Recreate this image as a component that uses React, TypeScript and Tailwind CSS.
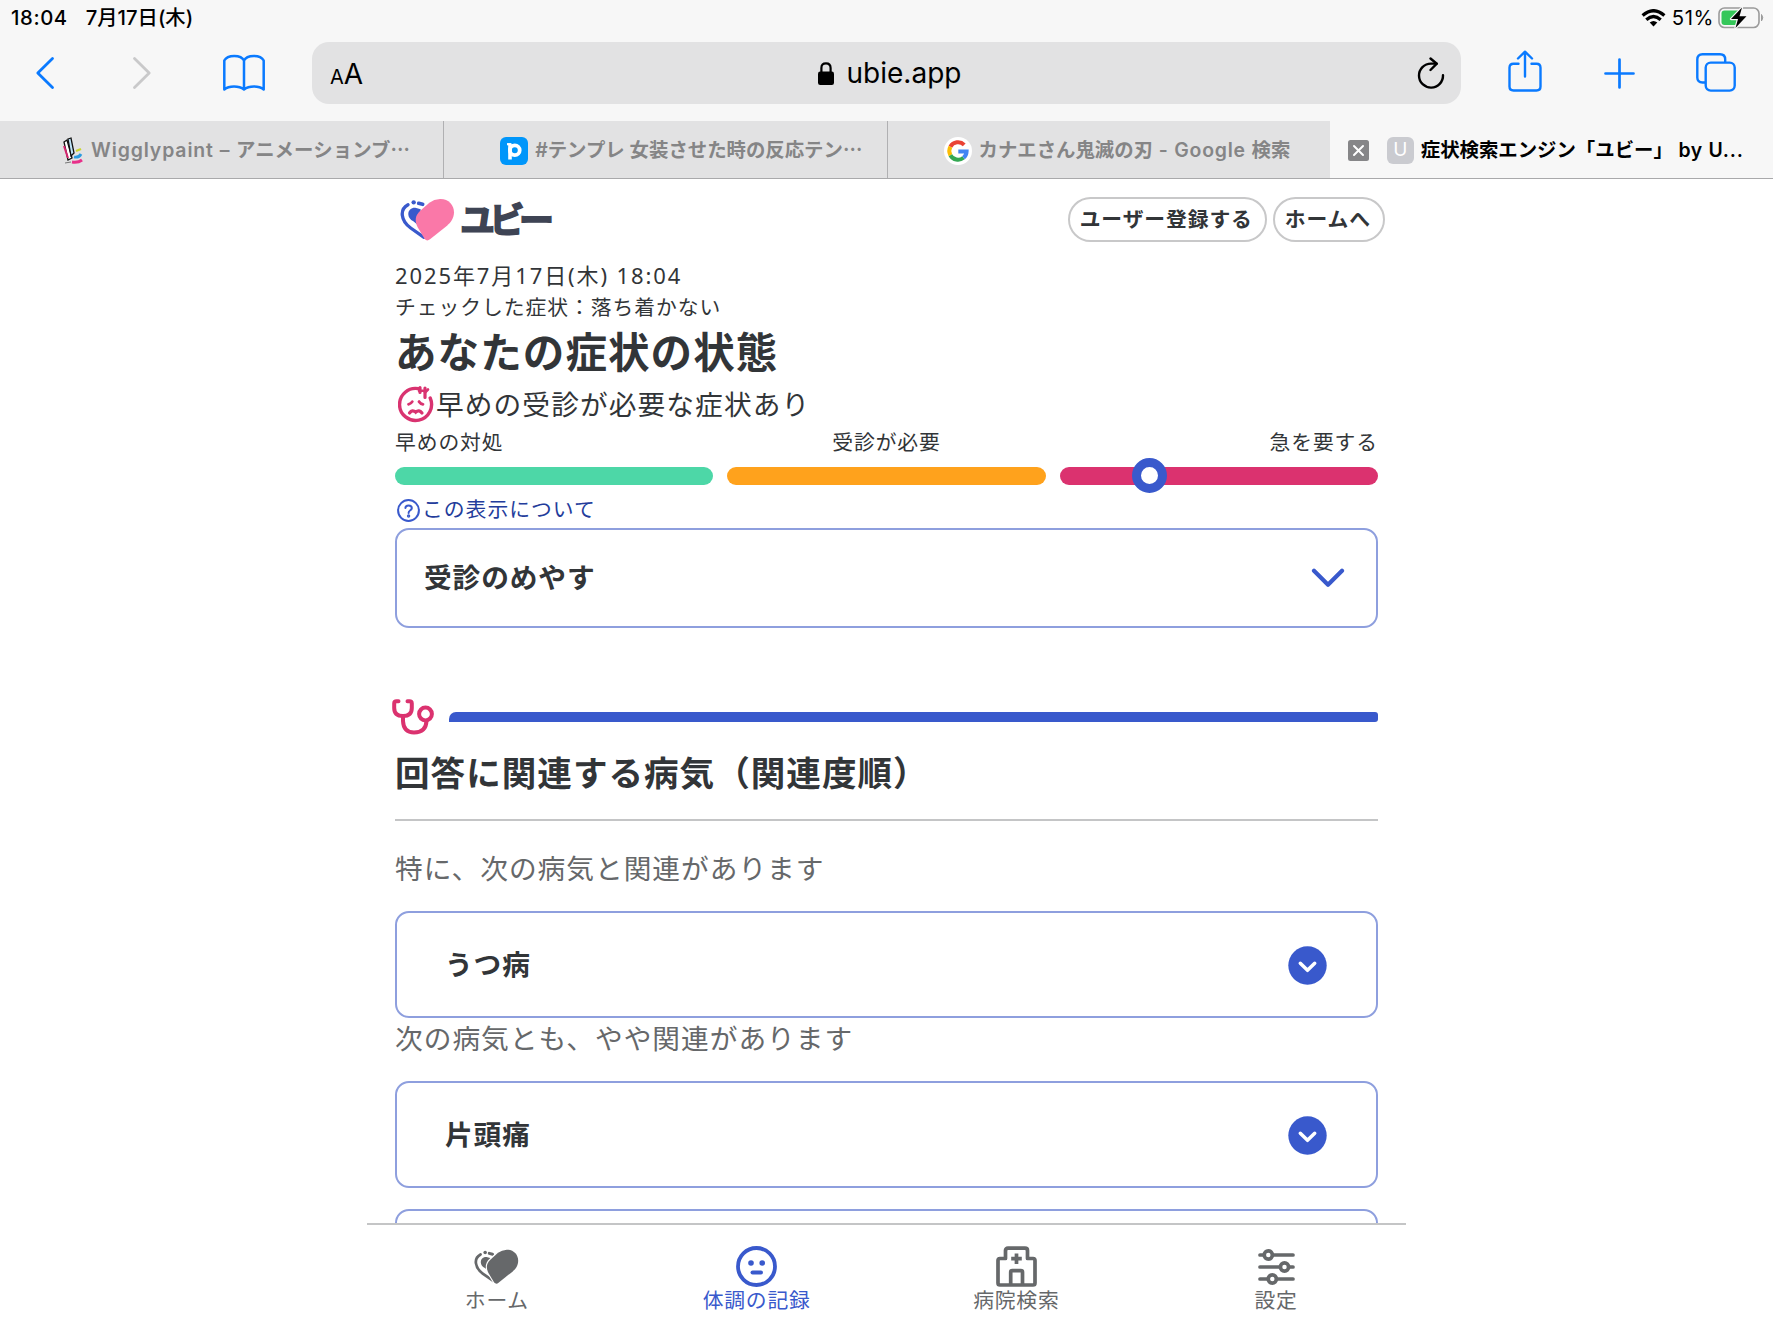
import type { ReactNode } from "react";

const browserTabs = [
  {
    id: "wiggly",
    title: (
      <>
        <span className="tracking-[0.9px]">Wigglypaint – </span>
        <span className="tracking-[0.1px]">アニメーションブ⋯</span>
      </>
    ),
    icon: <WigglyIcon />,
    pad: "pl-[62px]",
  },
  { id: "pixiv", title: "#テンプレ 女装させた時の反応テン⋯", icon: <PixivIcon />, pad: "pl-[56px]" },
  {
    id: "google",
    title: (
      <>
        カナエさん鬼滅の刃<span className="tracking-[0.8px]"> - Google </span>検索
      </>
    ),
    icon: <GoogleIcon />,
    pad: "pl-[56px]",
  },
];

function WigglyIcon() {
  return (
    <svg width="22" height="28" viewBox="0 0 22 28" fill="none" className="shrink-0">
      <path d="M2 5 L5 3 L10 21 L6 23 Z" fill="#fff" stroke="#111" strokeWidth="1.3" />
      <path d="M6 2 L9 1 L12 16 L9 19 Z" fill="#bfe3f7" stroke="#111" strokeWidth="1.3" />
      <path d="M2 9 L6 21" stroke="#d6246e" strokeWidth="2" />
      <path d="M14 14 L19 12" stroke="#c9d631" strokeWidth="2.4" />
      <path d="M12 20 Q17 21 19 17" stroke="#2a9be0" strokeWidth="2.8" />
      <path d="M10 25 Q16 26 20 23" stroke="#e8308a" strokeWidth="3" />
      <path d="M3 26 L9 25" stroke="#777" strokeWidth="1" />
    </svg>
  );
}

function PixivIcon() {
  return (
    <svg width="28" height="28" viewBox="0 0 28 28" className="shrink-0">
      <rect width="28" height="28" rx="6" fill="#0096fa" />
      <path d="M7 7.2 H11" stroke="#fff" strokeWidth="2.2" fill="none" />
      <path d="M10 6.5 V22.5" stroke="#fff" strokeWidth="3.6" />
      <circle cx="14.8" cy="13.3" r="4.9" fill="none" stroke="#fff" strokeWidth="3.8" />
    </svg>
  );
}

function GoogleIcon() {
  return (
    <svg width="28" height="28" viewBox="0 0 28 28" className="shrink-0">
      <circle cx="14" cy="14" r="14" fill="#fff" />
      <g fill="none" strokeWidth="4">
        <path d="M20.2 7.8 A8.7 8.7 0 0 0 6.4 9.8" stroke="#ea4335" />
        <path d="M6.4 9.8 A8.7 8.7 0 0 0 6.4 18.2" stroke="#fbbc05" />
        <path d="M6.4 18.2 A8.7 8.7 0 0 0 19.5 20.8" stroke="#34a853" />
        <path d="M19.5 20.8 A8.7 8.7 0 0 0 22.6 14.4 H14.3" stroke="#4285f4" />
      </g>
    </svg>
  );
}

function HeartMark({ front, back, halo }: { front: string; back: string; halo: number }) {
  return (
    <>
      <path d="M132 172 L92 144 C62 122 58 88 84 74" fill="none" stroke={back} strokeWidth="10" strokeLinecap="round" />
      <circle cx="101" cy="67" r="6.5" fill={back} />
      <path d="M116 70 L128 73" stroke={back} strokeWidth="11" strokeLinecap="round" />
      <path d="M85 104 C84 88 96 82 106 83 L122 88 L120 140 L100 124 C90 118 86 112 85 104Z" fill={back} />
      <path
        d="M180 57 C205 56 222 75 222 97 C222 114 213 127 201 137 L150 178 Q141 185 134 177 L113 142 C103 122 106 106 120 93 L148 68 Q162 58 180 57Z"
        fill={front}
        stroke="#fff"
        strokeWidth={halo}
        paintOrder="stroke"
      />
    </>
  );
}

function StatusBar() {
  return (
    <div className="flex h-[36px] items-start justify-between pt-[5px] pr-[8px] pl-[11px] text-[20.3px] leading-[25px] font-medium text-black">
      <div className="flex gap-[18px]">
        <span className="tracking-[0.6px]">18:04</span>
        <span>7月17日(木)</span>
      </div>
      <div className="flex items-center gap-[6px]">
        <svg width="25" height="18" viewBox="0 0 25 18" fill="none" stroke="#000" strokeWidth="3.3">
          <path d="M1.6 6.4 Q12.5 -3 23.4 6.4" />
          <path d="M5.3 10.7 Q12.5 4.4 19.7 10.7" />
          <path d="M12.5 17.5 L8.7 13.6 Q12.5 10.6 16.3 13.6 Z" fill="#000" stroke="none" />
        </svg>
        <span className="font-normal tracking-[0.6px]">51%</span>
        <svg width="47" height="24" viewBox="0 0 47 24" className="-ml-[2px]">
          <rect x="1" y="2" width="40" height="19.5" rx="5.5" fill="none" stroke="#9b9b9b" strokeWidth="1.6" />
          <path d="M6.5 4.5 H21 V19 H6.5 Q3.5 19 3.5 16 V7.5 Q3.5 4.5 6.5 4.5Z" fill="#34c759" />
          <path d="M43.5 8.5 Q46 11.7 43.5 15Z" fill="#9b9b9b" stroke="#9b9b9b" />
          <path d="M24 1.5 L13 13 H20 L17.5 22 L28.5 10.3 H21.5 Z" fill="#000" stroke="#f7f7f7" strokeWidth="2.4" paintOrder="stroke" strokeLinejoin="round" />
        </svg>
      </div>
    </div>
  );
}

function Toolbar() {
  return (
    <div className="flex h-[85px] items-start pt-[6px]">
      <div className="flex h-[62px] w-[312px] shrink-0 items-center pl-[35px]">
        <svg width="20" height="34" viewBox="0 0 20 34" fill="none" stroke="#0a7aff" strokeWidth="2.8" strokeLinecap="round" strokeLinejoin="round">
          <path d="M17.5 2.5 L2.8 17 L17.5 31.5" />
        </svg>
        <svg width="20" height="34" viewBox="0 0 20 34" fill="none" stroke="#c9c9ca" strokeWidth="2.8" strokeLinecap="round" strokeLinejoin="round" className="ml-[77px]">
          <path d="M2.5 2.5 L17.2 17 L2.5 31.5" />
        </svg>
        <svg width="42" height="38" viewBox="0 0 42 38" fill="none" stroke="#0a7aff" strokeWidth="2.5" strokeLinejoin="round" className="ml-[71px]">
          <path d="M21 6.5 C18 0.4 4.5 0.4 1.3 6.5 V35.5 C6 31.5 16 31.5 21 35.5 C26 31.5 36 31.5 40.7 35.5 V6.5 C37.5 0.4 24 0.4 21 6.5 V35.5" />
        </svg>
      </div>
      <div className="flex h-[62px] w-[1149px] shrink-0 items-center justify-between rounded-[17px] bg-[#e2e2e3] pr-[16px] pl-[18px] text-black">
        <div className="flex w-[60px] items-baseline pt-[2px] leading-none">
          <span className="text-[20px]">A</span>
          <span className="text-[28px]">A</span>
        </div>
        <div className="flex items-center gap-[13px] pl-[4px]">
          <svg width="16" height="23" viewBox="0 0 16 23">
            <path d="M3.4 11 V6 Q3.4 1.4 8 1.4 Q12.6 1.4 12.6 6 V11" fill="none" stroke="#000" strokeWidth="2.2" />
            <rect y="9.5" width="16" height="13.5" rx="2.2" />
          </svg>
          <span className="text-[28px] leading-[34px]">ubie.app</span>
        </div>
        <div className="flex w-[60px] justify-end">
          <svg width="28" height="32" viewBox="0 0 28 32" fill="none" stroke="#000" strokeWidth="2.4" strokeLinecap="round" strokeLinejoin="round">
            <path d="M26 18.2 A12 12 0 1 1 14 6.6 H19.5" />
            <path d="M13.5 1.5 L19.8 6.7 L13.5 13" />
          </svg>
        </div>
      </div>
      <div className="flex h-[60px] items-center pl-[47px]">
        <svg width="34" height="42" viewBox="0 0 34 42" fill="none" stroke="#0a7aff" strokeWidth="2.4" strokeLinecap="round" strokeLinejoin="round" className="-mt-[2px]">
          <path d="M10.5 13.7 H5.5 Q1.5 13.7 1.5 17.7 V36.5 Q1.5 40.5 5.5 40.5 H28.5 Q32.5 40.5 32.5 36.5 V17.7 Q32.5 13.7 28.5 13.7 H23.5" />
          <path d="M17 26.5 V2 M10 8.5 L17 1.7 L24 8.5" />
        </svg>
        <svg width="31" height="31" viewBox="0 0 31 31" stroke="#0a7aff" strokeWidth="2.7" strokeLinecap="round" className="mt-[2px] ml-[62px]">
          <path d="M15.5 1.5 V29.5 M1.5 15.5 H29.5" />
        </svg>
        <svg width="40" height="39" viewBox="0 0 40 39" fill="none" stroke="#0a7aff" strokeWidth="2.4" className="ml-[61px]">
          <path d="M9.5 29.5 H6.5 Q1.3 29.5 1.3 24.5 V6.5 Q1.3 1.3 6.5 1.3 H24 Q29.2 1.3 29.2 6.5 V9" />
          <rect x="9.7" y="9.6" width="29" height="28" rx="5" />
        </svg>
      </div>
    </div>
  );
}

function TabStrip() {
  return (
    <div className="grid h-[58px] grid-cols-4 border-b border-[#a9a9ab] text-[19.4px] font-semibold whitespace-nowrap">
      {browserTabs.map((tab, i) => (
        <div
          key={tab.id}
          className={`flex items-center gap-[7px] bg-[#e2e2e3] pt-[2px] text-[#858586] ${tab.pad} ${i > 0 ? "border-l border-[#b0b0b2]" : ""}`}
        >
          {tab.icon}
          <span className="pt-px whitespace-pre">{tab.title}</span>
        </div>
      ))}
      <div className="flex items-center pt-[2px] pl-[18px] text-black">
        <svg width="21" height="21" viewBox="0 0 21 21">
          <rect width="21" height="21" rx="2.5" fill="#868688" />
          <path d="M6 6 L15 15 M15 6 L6 15" stroke="#fff" strokeWidth="2" strokeLinecap="round" />
        </svg>
        <span className="ml-[18px] flex size-[27px] items-center justify-center rounded-[6px] bg-[#cacbd0] text-[19px] font-normal text-white">
          U
        </span>
        <span className="ml-[7px] pt-px">
          症状検索エンジン「ユビー」<span className="tracking-[0.7px]"> by U...</span>
        </span>
      </div>
    </div>
  );
}

function PillButton({ children }: { children: ReactNode }) {
  return (
    <button className="h-[45px] rounded-full border-2 border-[#c8c8c9] pr-[12px] pb-[3px] pl-[10px] text-[20.8px] leading-none font-bold tracking-[0.9px]">
      {children}
    </button>
  );
}

function DiseaseCard({ name }: { name?: string }) {
  return (
    <div className="flex h-[107px] shrink-0 items-center justify-between rounded-[14px] border-2 border-[#8e9fde] pr-[49px] pl-[48px]">
      <span className="pb-[2px] text-[27.7px] font-bold tracking-[0.9px]">{name}</span>
      <svg width="39" height="39" viewBox="0 0 39 39" className="mt-px">
        <circle cx="19.5" cy="19.5" r="19.2" fill="#3959cc" />
        <path d="M12.3 17.3 L19.5 24.3 L26.7 17.3" fill="none" stroke="#fff" strokeWidth="3.5" strokeLinecap="round" strokeLinejoin="round" />
      </svg>
    </div>
  );
}

function SeverityScale() {
  return (
    <>
      <div className="grid h-[42px] shrink-0 grid-cols-3 text-[20.8px] leading-[32px] tracking-[0.9px]">
        <span>早めの対処</span>
        <span className="text-center">受診が必要</span>
        <span className="text-right">急を要する</span>
      </div>
      <div className="grid shrink-0 grid-cols-3 gap-[14px]">
        <div className="h-[18px] rounded-full bg-[#4dd7a7]" />
        <div className="h-[18px] rounded-full bg-[#ffa21c]" />
        <div className="relative h-[18px] rounded-full bg-[#db326f]">
          <div className="absolute top-[-9px] left-[72px] size-[35px] rounded-full border-[9px] border-[#3959cc] bg-white" />
        </div>
      </div>
    </>
  );
}

function BottomNav() {
  return (
    <nav className="mx-auto grid h-[106px] w-[1039px] shrink-0 grid-cols-4 border-t-2 border-[#c4c5c6] bg-white pt-[21px] text-[20.8px] tracking-[0.8px] text-[#66686a]">
      <NavItem label="ホーム">
        <svg width="45" height="36" viewBox="60 55 165 130">
          <HeartMark front="#66686a" back="#66686a" halo={8} />
        </svg>
      </NavItem>
      <NavItem label="体調の記録" active>
        <svg width="41" height="41" viewBox="0 0 41 41" fill="#3959cc">
          <circle cx="20.5" cy="20.5" r="18.5" fill="none" stroke="#3959cc" strokeWidth="3.8" />
          <circle cx="15" cy="17" r="2.8" />
          <circle cx="26.2" cy="17" r="2.8" />
          <rect x="14.5" y="24.4" width="12.5" height="4" rx="2" />
        </svg>
      </NavItem>
      <NavItem label="病院検索">
        <svg width="41" height="41" viewBox="0 0 41 41" fill="none" stroke="#66686a" strokeWidth="3.7" strokeLinejoin="round">
          <path d="M9.5 12.5 V4.5 Q9.5 2.2 12 2.2 H29 Q31.5 2.2 31.5 4.5 V12.5 H37 Q39 12.5 39 14.5 V37 Q39 39 37 39 H4 Q2 39 2 37 V14.5 Q2 12.5 4 12.5 Z" />
          <path d="M14.7 39 V26.2 Q14.7 24.6 16.3 24.6 H24.9 Q26.5 24.6 26.5 26.2 V39" />
          <path d="M20.5 7.5 V18 M15.2 12.7 H25.8" />
        </svg>
      </NavItem>
      <NavItem label="設定">
        <svg width="37" height="38" viewBox="0 0 37 38" stroke="#66686a" strokeWidth="3.7" strokeLinecap="round">
          <path d="M2 7 H35 M2 19 H35 M2 31 H35" />
          <circle cx="10.3" cy="7" r="4.1" fill="#fff" />
          <circle cx="26.5" cy="19" r="4.1" fill="#fff" />
          <circle cx="14.3" cy="31" r="4.1" fill="#fff" />
        </svg>
      </NavItem>
    </nav>
  );
}

function NavItem({ label, active, children }: { label: string; active?: boolean; children: ReactNode }) {
  return (
    <div className={`flex flex-col items-center ${active ? "text-[#3959cc]" : ""}`}>
      <div className="flex h-[41px] items-center">{children}</div>
      <span className="-mt-px leading-[26px]">{label}</span>
    </div>
  );
}

export default function App() {
  return (
    <div className="flex h-[1329px] w-[1773px] flex-col overflow-hidden bg-white text-[#323538] [font-family:'Noto_Sans_CJK_JP',sans-serif]">
      <header className="shrink-0 bg-[#f7f7f7] [font-family:Inter,'Noto_Sans_CJK_JP',sans-serif]">
        <StatusBar />
        <Toolbar />
        <TabStrip />
      </header>

      <main className="mx-auto flex min-h-0 w-[1039px] flex-1 flex-col overflow-hidden px-[28px]">
        <div className="-mr-[7px] flex h-[81px] shrink-0 items-start pt-[18px] pl-[5px]">
          <svg width="55" height="44" viewBox="60 55 165 130" className="mt-[1px] shrink-0">
            <HeartMark front="#fa78a8" back="#3959cc" halo={0} />
          </svg>
          <span className="ml-[5px] text-[35px] leading-[41px] font-bold tracking-[-5.5px] text-[#3e4454] [-webkit-text-stroke:1.6px_#3e4454]">
            ユビー
          </span>
          <div className="ml-auto flex gap-[6px]">
            <PillButton>ユーザー登録する</PillButton>
            <PillButton>ホームへ</PillButton>
          </div>
        </div>

        <p className="h-[31px] shrink-0 text-[22px] leading-[31px] tracking-[1.9px] [font-family:'Noto_Sans','Noto_Sans_CJK_JP',sans-serif]">
          2025年7月17日(木) 18:04
        </p>
        <p className="h-[31px] shrink-0 text-[20.8px] leading-[31px] tracking-[0.95px]">
          チェックした症状：落ち着かない
        </p>
        <h1 className="h-[61px] shrink-0 text-[41.5px] leading-[57px] font-bold tracking-[1.1px]">
          あなたの症状の状態
        </h1>
        <div className="flex h-[42px] shrink-0 items-center gap-px pl-[3px] text-[27.7px] tracking-[1.1px]">
          <svg width="37" height="38" viewBox="0 0 37 38" fill="none" stroke="#d93370" strokeWidth="3.4" strokeLinecap="round">
            <path d="M20.5 3.7 A16 16 0 1 0 32.2 13" />
            <path d="M22 2.5 V7.5 M27 3 V12.5" strokeWidth="3.2" />
            <path d="M21 5.8 H25 M27 7.5 L30 4.5" strokeWidth="2.6" />
            <path d="M10.5 19.3 Q13 18.8 14.3 16.6 M21 16.6 Q22.5 18.8 25 19.3" strokeWidth="2.8" />
            <path d="M11.5 28 Q14.3 24 17.7 27.2 Q21 24 24 28" strokeWidth="3.2" />
          </svg>
          <span>早めの受診が必要な症状あり</span>
        </div>
        <SeverityScale />
        <div className="flex h-[43px] shrink-0 items-center gap-[2px] pt-[7px] pl-[2px] text-[20.8px] tracking-[1px] text-[#233c9b]">
          <svg width="23" height="23" viewBox="0 0 23 23" fill="none" stroke="#3959cc" strokeWidth="2">
            <circle cx="11.5" cy="11.5" r="10.4" />
            <path d="M8.4 9 Q8.4 6.4 11.6 6.4 Q14.8 6.4 14.8 9 Q14.8 10.5 13 11.5 Q11.6 12.3 11.6 14" strokeLinecap="round" />
            <circle cx="11.6" cy="17" r="0.7" />
          </svg>
          <span className="pb-[2px]">この表示について</span>
        </div>
        <div className="flex h-[100px] shrink-0 items-center justify-between rounded-[14px] border-2 border-[#8e9fde] pr-[31px] pl-[27px]">
          <span className="pb-[2px] text-[27.7px] font-bold tracking-[0.9px]">受診のめやす</span>
          <svg width="34" height="20" viewBox="0 0 34 20" fill="none" stroke="#3959cc" strokeWidth="4.2" strokeLinecap="round" strokeLinejoin="round">
            <path d="M3 2.8 L17 16.8 L31 2.8" />
          </svg>
        </div>

        <div className="mt-[71px] -ml-[3px] flex h-[36px] shrink-0 items-center">
          <svg width="42" height="36" viewBox="0 0 42 36" fill="none" stroke="#db326f" strokeWidth="4" strokeLinecap="round">
            <path d="M6.5 2.2 H4.5 Q2.2 2.2 2.2 4.5 V9 Q2.2 17 11 17 Q19.8 17 19.8 9 V4.5 Q19.8 2.2 17.5 2.2 H15.5" />
            <path d="M11 17.5 V22 Q11.5 33.5 22 33.5 Q34 33.5 34.5 22" />
            <circle cx="33.5" cy="15" r="6.4" />
          </svg>
          <div className="ml-[15px] h-[10px] flex-1 rounded-tl-[7px] rounded-r-[3px] bg-[#3959cc]" />
        </div>
        <h2 className="h-[86px] shrink-0 border-b-2 border-[#c4c5c6] pt-[12px] text-[34.6px] leading-[49px] font-bold tracking-[1px]">
          回答に関連する病気（関連度順）
        </h2>
        <p className="h-[90px] shrink-0 pt-[26px] text-[27.7px] leading-[41px] tracking-[1px] text-[#66686a]">
          特に、次の病気と関連があります
        </p>
        <DiseaseCard name="うつ病" />
        <p className="h-[63px] shrink-0 text-[27.7px] leading-[39px] tracking-[1px] text-[#66686a]">
          次の病気とも、やや関連があります
        </p>
        <DiseaseCard name="片頭痛" />
        <div className="mt-[21px] flex shrink-0 flex-col">
          <DiseaseCard />
        </div>
      </main>

      <BottomNav />
    </div>
  );
}
